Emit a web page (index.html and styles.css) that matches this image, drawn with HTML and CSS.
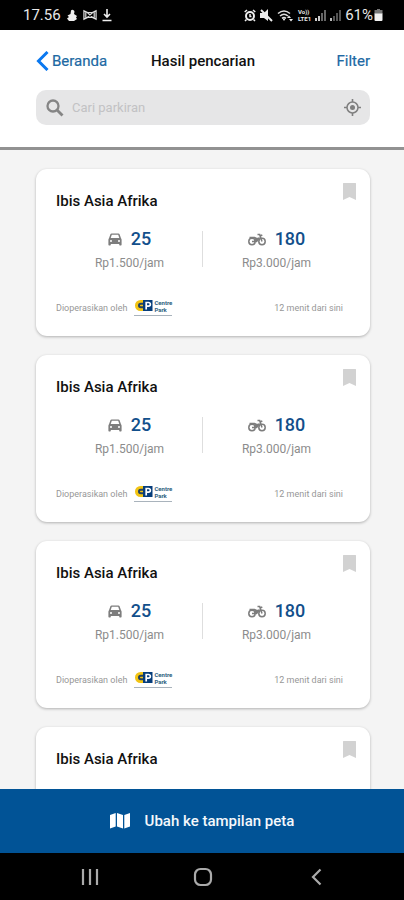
FILE: index.html
```html
<!DOCTYPE html>
<html lang="id">
<head>
<meta charset="utf-8">
<meta name="viewport" content="width=device-width, initial-scale=1">
<title>Hasil pencarian</title>
<link rel="stylesheet" href="styles.css">
</head>
<body>
<svg class="sprite" aria-hidden="true">
  <symbol id="car" viewBox="0 0 14 13">
    <path fill="#7d7d7d" fill-rule="evenodd" d="M3.6.5h6.8c.6 0 1 .3 1.200.8L13 5.300c.4.4.6.9.6 1.500v5c0 .4-.3.7-.7.7h-1c-.4 0-.7-.3-.7-.7V11H2.800v.8c0 .4-.3.700-.7.700h-1c-.4 0-.7-.3-.7-.7v-5c0-.6.200-1.100.6-1.500l1.400-4C2.600.8 3 .5 3.600.5zm.2 1.300L2.700 5h8.600l-1.100-3.200zM3 7a1 1 0 1 0 0 2 1 1 0 0 0 0-2zm8 0a1 1 0 1 0 0 2 1 1 0 0 0 0-2z"/>
  </symbol>
  <symbol id="motor" viewBox="0 0 18 13">
    <g fill="none" stroke="#7d7d7d" stroke-width="1.500">
      <circle cx="4" cy="8.500" r="3.200"/><circle cx="14" cy="8.500" r="3.200"/>
      <path d="M1.500 4.500h5l2 1h2.500M4 8.500h4.500l3-4M9.500 1.500h2.200l2.300 7M11.500 3.500l2.800-1.700"/>
    </g>
    <path fill="#7d7d7d" d="M6.500 5h5L8.800 9H6z"/>
  </symbol>
  <symbol id="bookmark" viewBox="0 0 13 17">
    <path fill="#d2d2d2" d="M.5 0h12q.5 0 .5.5V17l-6.500-3L0 17V.5Q0 0 .5 0z"/>
  </symbol>
  <symbol id="mark" viewBox="0 0 20 13">
    <path fill="#f2c414" d="M6.500 1H10v11H6.500a5.500 5.500 0 0 1 0-11z"/>
    <path fill="none" stroke="#25435f" stroke-width="2" d="M9 4.700H6.800a1.800 1.800 0 0 0 0 3.600H9"/>
    <path fill="#063d7b" d="M9 1h9.500v11H9z"/>
    <path fill="none" stroke="#fff" stroke-width="1.700" d="M12.200 10.500v-7h2.300a1.700 1.700 0 0 1 0 3.700h-2.300"/>
  </symbol>
</svg>

<div class="status">
  <span class="clock">17.56</span>
  <svg width="12" height="14" viewBox="0 0 12 14"><path fill="#eee" d="M5 2.500a2 2 0 0 1 3.500 1.300L8 6l3 2-1 1.500 1 1.500-3 2H3L1 10.500 3 9 1.500 7.500 4.500 6z"/></svg>
  <svg width="14" height="12" viewBox="0 0 15 12"><path fill="none" stroke="#ddd" stroke-width="1.300" d="M1 1.500l4 2h5l4-2v9l-4-2H5l-4 2zM3 3v6M12 3v6M5 4l5 4M10 4L5 8"/></svg>
  <svg width="10" height="14" viewBox="0 0 10 14"><path fill="none" stroke="#eee" stroke-width="1.600" d="M5 1v8M2 6l3 3 3-3M.5 12.500h9"/></svg>
  <span class="status-right">
    <svg width="12" height="13" viewBox="0 0 12 13"><circle cx="6" cy="7" r="4" fill="none" stroke="#eee" stroke-width="2"/><path fill="none" stroke="#eee" stroke-width="1.500" d="M6 5v2.500h1.500M.7 3L3 1M9 1l2.300 2M2.500 10.500L1 12M9.500 10.500L11 12"/></svg>
    <svg width="13" height="13" viewBox="0 0 13 13"><path fill="#eee" d="M0 4h4l4-4v12L4 9H0z"/><path stroke="#eee" stroke-width="2" d="M1 1l11 11"/></svg>
    <svg width="17" height="13" viewBox="0 0 17 13"><path fill="none" stroke="#ddd" stroke-width="1.600" d="M1 4.500q6-5 12 0M3 7q4-3.500 8 0M5 9.300q2-1.500 4 0"/><path fill="#eee" d="M5.500 9.500h3L7 12zM10 9l2-2.500L14 9zM12 10h4l-2 2.500z"/></svg>
    <span class="volte"><span>Vo))</span><span>LTE1</span></span>
    <svg width="11" height="12" viewBox="0 0 11 12"><path fill="#ccc" d="M0 9h2v3H0zM3 7h2v5H3z"/><path fill="#666" d="M6 4h2v8H6zM9 1h2v11H9z"/></svg>
    <svg width="11" height="12" viewBox="0 0 11 12"><path fill="#bbb" d="M0 9h2v3H0z"/><path fill="#555" d="M3 7h2v5H3zM6 4h2v8H6zM9 1h2v11H9z"/></svg>
    <span class="charge">61%</span>
    <svg width="9" height="12" viewBox="0 0 9 12"><path fill="#777" d="M3 0h3v1h2.500v4h-8V1H3z"/><path fill="#f2f2f2" d="M.5 4.500h8V11q0 1-1 1h-6q-1 0-1-1z"/></svg>
  </span>
</div>

<header class="top">
  <nav class="bar">
    <a class="back" href="#beranda"><svg width="13" height="20" viewBox="0 0 13 20"><path fill="none" stroke="#0a78f0" stroke-width="3" d="M11.500 1L2.500 10l9 9"/></svg>Beranda</a>
    <h1>Hasil pencarian</h1>
    <a class="filter" href="#filter">Filter</a>
  </nav>
  <form class="search">
    <svg width="18" height="18" viewBox="0 0 18 18"><circle cx="7" cy="7" r="5.500" fill="none" stroke="#858585" stroke-width="2.300"/><path stroke="#858585" stroke-width="2.800" d="M11 11l5.500 5.500"/></svg>
    <input type="search" aria-label="Cari parkiran" placeholder="Cari parkiran">
    <button type="button" aria-label="Lokasi saya"><svg width="17" height="17" viewBox="0 0 17 17"><circle cx="8.500" cy="8.500" r="5.500" fill="none" stroke="#7f7f7f" stroke-width="1.500"/><circle cx="8.500" cy="8.500" r="2.500" fill="#7f7f7f"/><path stroke="#7f7f7f" stroke-width="1.600" d="M8.500 0v3M8.500 14v3M0 8.500h3M14 8.500h3"/></svg></button>
  </form>
</header>

<main class="list">
  <article class="card">
    <h2>Ibis Asia Afrika</h2>
    <button class="save" type="button" aria-label="Simpan"><svg width="13" height="17"><use href="#bookmark"/></svg></button>
    <div class="slots">
      <div class="slot"><div class="count"><svg width="14" height="13"><use href="#car"/></svg>25</div><div class="price">Rp1.500/jam</div></div>
      <div class="slot"><div class="count"><svg width="18" height="13"><use href="#motor"/></svg>180</div><div class="price">Rp3.000/jam</div></div>
    </div>
    <div class="meta"><span>Dioperasikan oleh</span><span class="logo"><svg width="20" height="13"><use href="#mark"/></svg><span class="brand"><span>Centre</span><span>Park</span></span></span><span class="distance">12 menit dari sini</span></div>
  </article>
  <article class="card">
    <h2>Ibis Asia Afrika</h2>
    <button class="save" type="button" aria-label="Simpan"><svg width="13" height="17"><use href="#bookmark"/></svg></button>
    <div class="slots">
      <div class="slot"><div class="count"><svg width="14" height="13"><use href="#car"/></svg>25</div><div class="price">Rp1.500/jam</div></div>
      <div class="slot"><div class="count"><svg width="18" height="13"><use href="#motor"/></svg>180</div><div class="price">Rp3.000/jam</div></div>
    </div>
    <div class="meta"><span>Dioperasikan oleh</span><span class="logo"><svg width="20" height="13"><use href="#mark"/></svg><span class="brand"><span>Centre</span><span>Park</span></span></span><span class="distance">12 menit dari sini</span></div>
  </article>
  <article class="card">
    <h2>Ibis Asia Afrika</h2>
    <button class="save" type="button" aria-label="Simpan"><svg width="13" height="17"><use href="#bookmark"/></svg></button>
    <div class="slots">
      <div class="slot"><div class="count"><svg width="14" height="13"><use href="#car"/></svg>25</div><div class="price">Rp1.500/jam</div></div>
      <div class="slot"><div class="count"><svg width="18" height="13"><use href="#motor"/></svg>180</div><div class="price">Rp3.000/jam</div></div>
    </div>
    <div class="meta"><span>Dioperasikan oleh</span><span class="logo"><svg width="20" height="13"><use href="#mark"/></svg><span class="brand"><span>Centre</span><span>Park</span></span></span><span class="distance">12 menit dari sini</span></div>
  </article>
  <article class="card">
    <h2>Ibis Asia Afrika</h2>
    <button class="save" type="button" aria-label="Simpan"><svg width="13" height="17"><use href="#bookmark"/></svg></button>
  </article>
</main>

<button class="map" type="button"><svg width="20" height="16" viewBox="0 0 20 16"><path fill="#fff" d="M0 2l5.700-2v13.500L0 15.500zM7 0l6 2v13.500l-6-2zM14.300 2L20 0v13.500l-5.700 2z"/></svg>Ubah ke tampilan peta</button>

<nav class="system">
  <button type="button" aria-label="Terbaru"><svg width="18" height="18" viewBox="0 0 18 18"><path stroke="#aaa" stroke-width="2.200" d="M2 1v16M9 1v16M16 1v16"/></svg></button>
  <button type="button" aria-label="Layar utama"><svg width="20" height="20" viewBox="0 0 20 20"><rect x="2" y="2" width="16" height="16" rx="5.500" fill="none" stroke="#aaa" stroke-width="2.200"/></svg></button>
  <button type="button" aria-label="Kembali"><svg width="12" height="18" viewBox="0 0 12 18"><path fill="none" stroke="#aaa" stroke-width="2.200" d="M10.500 1.500L3 9l7.500 7.500"/></svg></button>
</nav>
</body>
</html>
```
FILE: styles.css
```css
* { box-sizing: border-box; }
body {
  margin: 0;
  height: 100vh;
  display: flex;
  flex-direction: column;
  background: #f4f4f4;
  font-family: Roboto, "Liberation Sans", sans-serif;
  color: #111;
}
svg { display: block; flex: none; }
.sprite { position: absolute; width: 0; height: 0; }
button { border: 0; padding: 0; background: none; font: inherit; color: inherit; }
a { color: #2069a3; text-decoration: none; }
h1, h2 { margin: 0; font-weight: 500; }

.status {
  flex: none;
  height: 30px;
  padding: 0 21px 0 23px;
  display: flex;
  align-items: center;
  gap: 5px;
  background: #000;
  color: #e8e8e8;
  font-size: 15px;
}
.status-right { margin-left: auto; display: flex; align-items: center; gap: 4px; }
.status-right .charge { margin-right: -3px; }
.volte { display: flex; flex-direction: column; font-size: 6px; line-height: 7px; font-weight: 700; }

.top {
  flex: none;
  padding: 20px 34px 22px 36px;
  background: #fff;
  border-bottom: 3px solid #929292;
}
.bar {
  display: grid;
  grid-template-columns: 1fr auto 1fr;
  align-items: center;
  height: 22px;
  font-size: 15px;
}
.back { display: flex; align-items: center; gap: 3px; }
.bar h1 { font-size: 15px; }
.bar a { -webkit-text-stroke: .2px #2069a3; }
.filter { justify-self: end; }
.search {
  margin-top: 18px;
  height: 35px;
  padding: 0 9px 0 10px;
  display: flex;
  align-items: center;
  gap: 8px;
  background: #e6e6e7;
  border-radius: 10px;
}
.search input {
  flex: 1;
  min-width: 0;
  padding: 0;
  border: 0;
  background: none;
  font: 13px Roboto, sans-serif;
  outline: 0;
}
.search input::placeholder { color: #c2c2c4; opacity: 1; }

.list {
  flex: 1;
  min-height: 0;
  overflow: hidden;
  padding: 19px 34px 0 36px;
}
.card {
  position: relative;
  height: 167px;
  margin-bottom: 19px;
  padding: 22px 20px 0;
  background: #fff;
  border-radius: 11px;
  box-shadow: 0 1px 3px rgba(0, 0, 0, .28);
}
.card h2 { font-size: 15px; line-height: 20px; }
.save { position: absolute; top: 14px; right: 14px; }
.slots { margin-top: 16px; display: grid; grid-template-columns: 1fr 1fr; text-align: center; }
.slot { height: 46px; }
.slot:first-child { background: linear-gradient(#dedede, #dedede) right 4px / 1px 36px no-repeat; }
.count {
  display: flex;
  align-items: center;
  justify-content: center;
  gap: 9px;
  font-size: 18px;
  line-height: 24px;
  font-weight: 500;
  color: #124f8b;
}
.price { margin-top: 2px; font-size: 12px; line-height: 20px; color: #8c8c8c; }
.meta {
  margin-top: 25px;
  padding-right: 7px;
  display: flex;
  align-items: center;
  height: 20px;
  font-size: 9px;
  color: #979797;
}
.logo {
  margin: 0 0 2px 7px;
  padding-bottom: 2px;
  display: flex;
  align-items: center;
  border-bottom: 1px solid #a9b3bc;
}
.brand { display: flex; flex-direction: column; font-size: 6px; line-height: 7px; font-weight: 700; color: #2d6180; }
.distance { margin-left: auto; }

.map {
  flex: none;
  height: 64px;
  display: flex;
  align-items: center;
  justify-content: center;
  gap: 15px;
  background: #015396;
  color: #f4f8fc;
  font-size: 15px;
  font-weight: 500;
}
.system {
  flex: none;
  height: 47px;
  padding: 0 31px 0 33px;
  display: grid;
  grid-template-columns: repeat(3, 1fr);
  place-items: center;
  background: #000;
}
```
